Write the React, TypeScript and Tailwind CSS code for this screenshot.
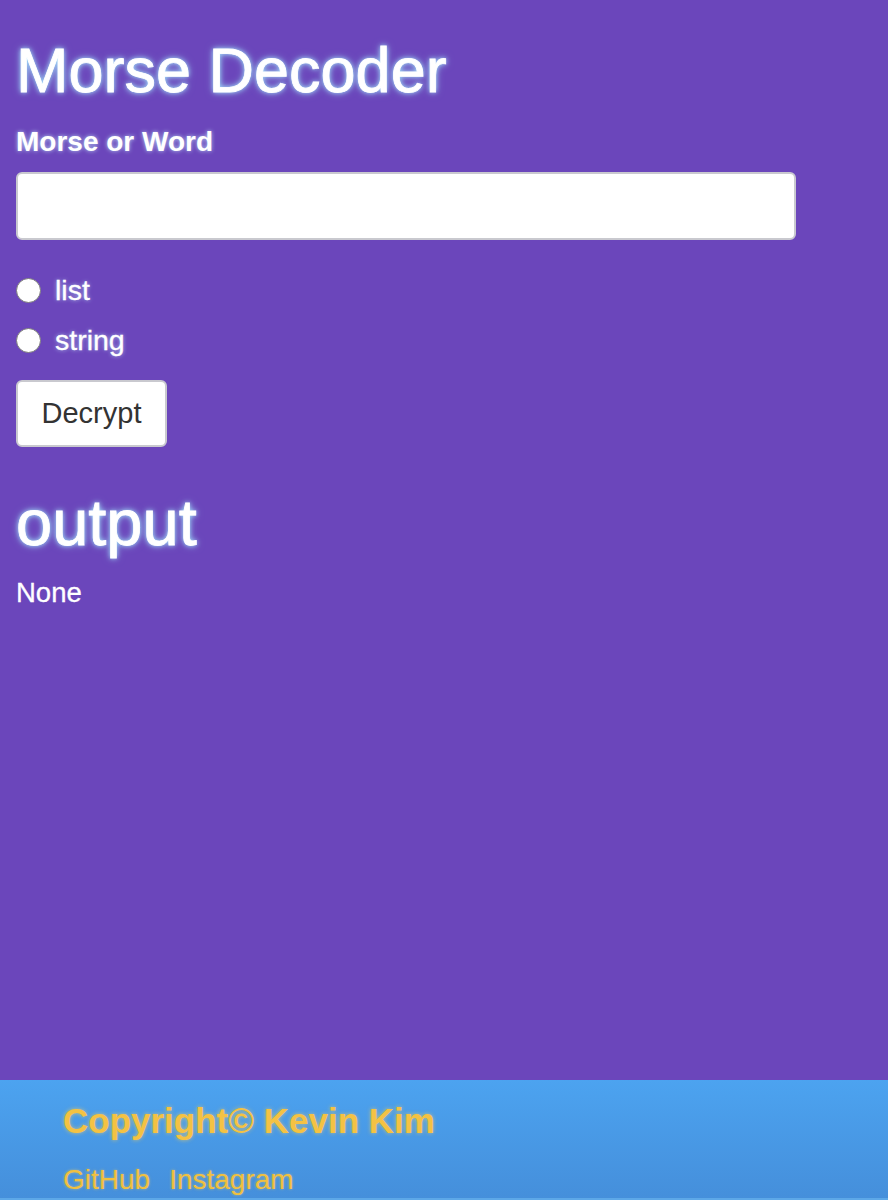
import { useState } from 'react';

const App = () => {
    const [mode, setMode] = useState<string>('');
    const [text, setText] = useState('');

    return (
        <div className="min-h-[1200px] flex flex-col bg-[#6b46bb] font-['Liberation_Sans',Arial,sans-serif]">
            <main className="flex-1 px-4 pt-[39px]">
                <h1 className="text-[63px] leading-[63px] text-white [-webkit-text-stroke:0.8px_white] [text-shadow:0_0_5px_#a8ecff,0_0_9px_rgba(160,230,255,0.6)]">
                    Morse Decoder
                </h1>

                <label className="block mt-[26px] text-[28px] leading-[28px] font-bold text-white [text-shadow:0_0_4px_rgba(200,240,255,0.8)]">
                    Morse or Word
                </label>
                <input
                    value={text}
                    onChange={(e) => setText(e.target.value)}
                    className="block mt-[16px] w-[780px] h-[68px] bg-white border-2 border-[#c9c9cf] rounded-[6px] px-4 text-[27px] outline-none"
                />

                <div className="mt-[35px] flex flex-col gap-[20px]">
                    {['list', 'string'].map((m) => (
                        <label key={m} className="flex items-center h-[30px] gap-[14px] cursor-pointer">
                            <input
                                type="radio"
                                name="mode"
                                checked={mode === m}
                                onChange={() => setMode(m)}
                                className="appearance-none w-[25px] h-[25px] rounded-full bg-white border-[1.5px] border-[#7c7c7c] checked:border-[7px] checked:border-[#1a73e8]"
                            />
                            <span className="text-[28.5px] leading-[30px] text-white [-webkit-text-stroke:0.3px_white] [text-shadow:0_0_4px_rgba(200,240,255,0.7)]">
                                {m}
                            </span>
                        </label>
                    ))}
                </div>

                <button className="block mt-[25px] w-[151px] h-[67px] bg-white border-2 border-[#c9c9cf] rounded-[6px] text-[29px] text-[#333333]">
                    Decrypt
                </button>

                <h2 className="mt-[43px] text-[65px] leading-[65px] text-white [-webkit-text-stroke:0.8px_white] [text-shadow:0_0_5px_#a8ecff,0_0_9px_rgba(160,230,255,0.6)]">
                    output
                </h2>
                <p className="mt-[24px] text-[27.5px] leading-[27.5px] text-white [-webkit-text-stroke:0.3px_white]">None</p>
            </main>

            <footer className="h-[120px] pl-[63px] pt-[23px] bg-gradient-to-b from-[#4ca3f0] to-[#458fdb] border-b-2 border-[#5da8e8]">
                <p className="text-[35px] leading-[35px] font-bold text-[#f4c243] [text-shadow:0_0_4px_rgba(250,210,90,0.7)]">
                    Copyright© Kevin Kim
                </p>
                <div className="mt-[28px] flex gap-[19px] text-[28px] leading-[28px] text-[#f0c03f] [text-shadow:0_0_3px_rgba(250,210,90,0.6)]">
                    <a href="#">GitHub</a>
                    <a href="#">Instagram</a>
                </div>
            </footer>
        </div>
    );
};

export default App;
